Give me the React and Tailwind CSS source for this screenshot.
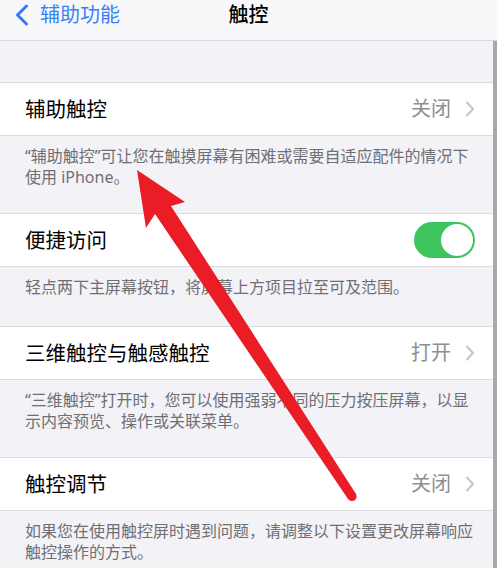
import React from 'react';

/**
 * 触控 settings page (iOS style)
 * - nav bar with back link
 * - grouped rows with a footer note under each
 * - red arrow overlay pointing at the first footer
 */

const sections = [
  {
    label: '辅助触控',
    value: '关闭',
    note: '“辅助触控”可让您在触摸屏幕有困难或需要自适应配件的情况下使用 iPhone。',
    noteClass: 'h-[77px]',
  },
  {
    label: '便捷访问',
    toggle: true,
    note: '轻点两下主屏幕按钮，将屏幕上方项目拉至可及范围。',
    noteClass: 'h-[59px]',
  },
  {
    label: '三维触控与触感触控',
    value: '打开',
    note: '“三维触控”打开时，您可以使用强弱不同的压力按压屏幕，以显示内容预览、操作或关联菜单。',
    noteClass: 'h-[77px]',
  },
  {
    label: '触控调节',
    value: '关闭',
    note: '如果您在使用触控屏时遇到问题，请调整以下设置更改屏幕响应触控操作的方式。',
    noteClass: 'h-[77px]',
  },
];

function Chevron() {
  return (
    <svg width="10" height="16" viewBox="0 0 10 16" className="ml-[14px]">
      <path d="M2 1.5 L8 8 L2 14.5" fill="none" stroke="#c5c5c9" strokeWidth="2" strokeLinecap="round" strokeLinejoin="round" />
    </svg>
  );
}

function Toggle() {
  return (
    <div className="w-[61px] h-[36px] rounded-full bg-[#3ec45c] flex items-center justify-end p-[2px]">
      <div className="w-[32px] h-[32px] rounded-full bg-white" />
    </div>
  );
}

function App() {
  return (
    <div
      className="relative w-[497px] h-[568px] overflow-hidden bg-[#f2f2f7]"
      style={{ fontFamily: '"Noto Sans", "Noto Sans CJK SC", sans-serif' }}
    >
      {/* nav bar */}
      <div className="h-[41px] bg-[#f8f8fa] border-b border-[#d8d8dc] flex items-start pt-[3px] relative">
        <div className="flex items-center pl-[14px] text-[#3a80f6]">
          <svg width="16" height="22" viewBox="0 0 16 22">
            <path d="M12.5 2 L3.5 11 L12.5 20" fill="none" stroke="#3479f5" strokeWidth="3" strokeLinecap="round" strokeLinejoin="round" />
          </svg>
          <span className="ml-[10px] text-[20px] leading-[24px]">辅助功能</span>
        </div>
        <div className="absolute left-0 right-0 top-[3px] text-center text-[20px] leading-[24px] font-medium text-black">
          触控
        </div>
      </div>

      <div className="flex">
        <div className="flex-1">
          <div className="h-[41px]" />
          {sections.map((s) => (
            <div key={s.label}>
              <div className="h-[54px] bg-white border-y border-[#dcdce0] flex items-center pl-[25px] pr-[18px]">
                <span className="flex-1 text-[20.5px] text-black">{s.label}</span>
                {s.toggle ? (
                  <Toggle />
                ) : (
                  <div className="flex items-center">
                    <span className="text-[20px] text-[#8e8e93]">{s.value}</span>
                    <Chevron />
                  </div>
                )}
              </div>
              <div className={`${s.noteClass} pl-[25px] pr-[18px] pt-[10px] text-[16px] leading-[21px] text-[#6f6f74]`}>
                {s.note}
              </div>
            </div>
          ))}
        </div>
        {/* scrollbar edge */}
        <div className="w-[4px] bg-[#a9a9ac] h-[540px]" />
      </div>

      {/* red arrow */}
      <svg className="absolute left-0 top-0 pointer-events-none" width="497" height="568" viewBox="0 0 497 568">
        <polygon
          points="137,170 185,202 171,206 356,494 348,499 155,214 146,228"
          fill="#ea1d27"
        />
        <circle cx="352" cy="496.5" r="4.6" fill="#ea1d27" />
      </svg>
    </div>
  );
}

export default App;
